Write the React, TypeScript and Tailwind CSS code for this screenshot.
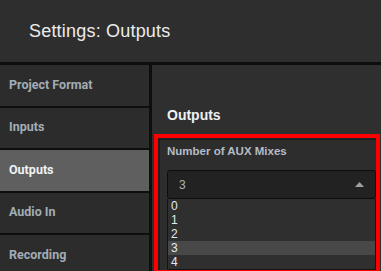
const navItems = ["Project Format", "Inputs", "Outputs", "Audio In", "Recording"];
const options = ["0", "1", "2", "3", "4"];

export default function App() {
  const selected = "Outputs";
  const value = "3";

  return (
    <div className="w-[381px] h-[271px] overflow-hidden bg-[#2f2f2f] flex flex-col font-['Liberation_Sans',Arial,sans-serif]">
      {/* Header */}
      <div className="h-[62px] shrink-0 bg-[#2e2e2e] border-b-[3px] border-[#0e0e0e] box-content flex items-center pl-[29px]">
        <h1 className="text-[18px] text-[#ececec] tracking-[0.2px]">Settings: Outputs</h1>
      </div>

      <div className="flex flex-1 min-h-0">
        {/* Sidebar */}
        <div className="w-[149px] shrink-0 flex flex-col bg-[#0e0e0e] border-r-[3px] border-[#0e0e0e] box-content">
          {navItems.map((item) => (
            <div
              key={item}
              className={`h-[40.5px] shrink-0 mb-[2px] flex items-center pl-[9px] font-['Roboto',sans-serif] font-bold text-[12.5px] ${
                item === selected ? "bg-[#5f5f5f] text-[#f0f2f4]" : "bg-[#2c2c2c] text-[#a3acb5]"
              }`}
            >
              {item}
            </div>
          ))}
        </div>

        {/* Content */}
        <div className="flex-1 min-w-0 flex flex-col pl-[2px] pr-[1px]">
          <h2 className="mt-[42px] ml-[13px] h-[16px] leading-[16px] text-[14px] font-bold text-[#eef0f2]">Outputs</h2>

          <div className="mt-[11px] flex-1 border-4 border-[#ff0000] flex flex-col">
            <div className="flex-1 border-t-2 border-l-2 border-[#1f1f1f] bg-[#2d2d2d] flex flex-col pl-[7px]">
              <div className="mt-[4px] h-[14px] leading-[14px] text-[11.5px] font-bold text-[#b4bcc5]">Number of AUX Mixes</div>

              <div className="mt-[12px] h-[29px] bg-[#222222] border border-[#0d0d0d] rounded-[3px] flex items-center justify-between pl-[11px] pr-[11px]">
                <span className="text-[12px] text-[#aab3bc]">{value}</span>
                <svg width="9" height="5" viewBox="0 0 9 5">
                  <path d="M0 5 L4.5 0 L9 5 Z" fill="#a0a0a0" />
                </svg>
              </div>

              <div className="border border-t-0 border-[#151515] bg-[#2f2f2f] flex flex-col">
                {options.map((o) => (
                  <div
                    key={o}
                    className={`h-[14px] leading-[14px] pl-[3px] text-[12px] text-[#e4e9ef] ${
                      o === value ? "bg-[#484848]" : ""
                    }`}
                  >
                    {o}
                  </div>
                ))}
              </div>
            </div>
          </div>
        </div>
      </div>
    </div>
  );
}
